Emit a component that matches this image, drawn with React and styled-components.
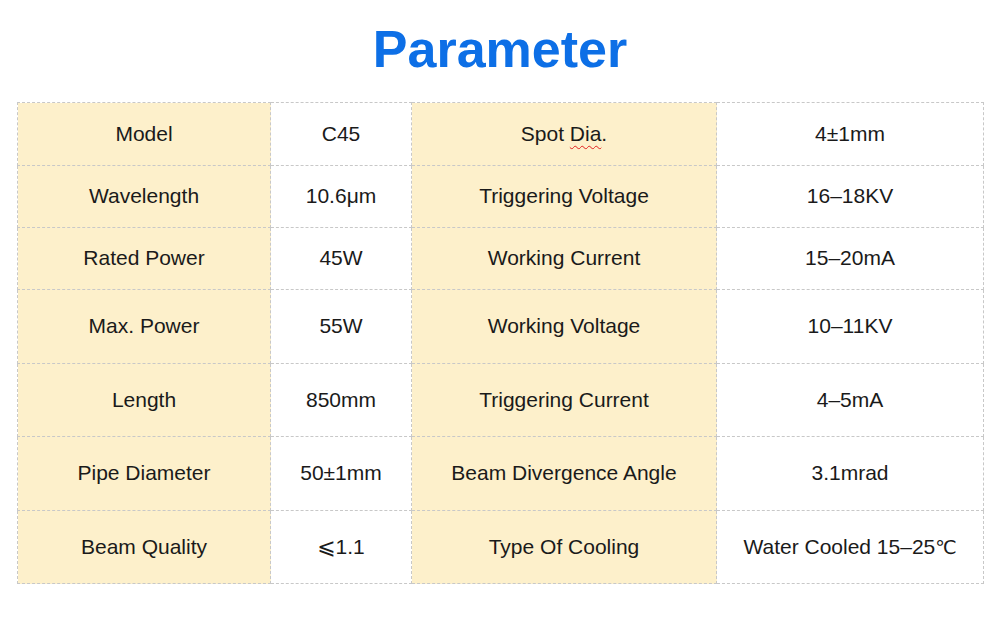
import React from "react";
import styled, { createGlobalStyle } from "styled-components";

const Global = createGlobalStyle`
  html, body { margin: 0; padding: 0; background: #fff; }
  body { font-family: "Liberation Sans", Arial, "DejaVu Sans", "Noto Sans CJK SC", sans-serif; }
`;

const Page = styled.div`
  width: 1000px;
  height: 626px;
  box-sizing: border-box;
  padding: 0 17px 0 17px;
  display: flex;
  flex-direction: column;
`;

const Title = styled.h1`
  margin: 0;
  height: 102px;
  display: flex;
  align-items: center;
  justify-content: center;
  font-family: "Liberation Sans", Arial, sans-serif;
  font-weight: 700;
  font-size: 52px;
  color: #0d6fe6;
  padding-bottom: 4px;
  box-sizing: border-box;
`;

const Table = styled.table`
  width: 966px;
  border-collapse: collapse;
  table-layout: fixed;
`;

const Row = styled.tr`
  height: ${(p) => p.$h}px;
`;

const Cell = styled.td`
  border: 1px dashed #c8c8c8;
  background: ${(p) => (p.$label ? "#fdf0cb" : "#ffffff")};
  text-align: center;
  vertical-align: middle;
  padding: 0 0 1px 0;
  font-size: 21px;
  line-height: 24px;
  color: #1a1a1a;
`;

const Symbol = styled.span`
  font-family: "DejaVu Sans", sans-serif;
  font-size: ${(p) => p.$size || 19}px;
  line-height: 0;
`;

const Squiggle = styled.span`
  text-decoration: underline wavy #e02020;
  text-decoration-thickness: 1px;
  text-underline-offset: 4px;
`;

const rows = [
  [63, "Model", "C45", <>Spot <Squiggle>Dia</Squiggle>.</>, "4±1mm"],
  [62, "Wavelength", "10.6μm", "Triggering Voltage", "16–18KV"],
  [62, "Rated Power", "45W", "Working Current", "15–20mA"],
  [74, "Max. Power", "55W", "Working Voltage", "10–11KV"],
  [73, "Length", "850mm", "Triggering Current", "4–5mA"],
  [74, "Pipe Diameter", "50±1mm", "Beam Divergence Angle", "3.1mrad"],
  [73, "Beam Quality", <><Symbol $size={22}>⩽</Symbol>1.1</>, "Type Of Cooling", <>Water Cooled 15–25<Symbol>℃</Symbol></>],
];

export default function App() {
  return (
    <>
      <Global />
      <Page>
        <Title>Parameter</Title>
        <Table>
          <colgroup>
            <col style={{ width: 253 }} />
            <col style={{ width: 141 }} />
            <col style={{ width: 305 }} />
            <col style={{ width: 267 }} />
          </colgroup>
          <tbody>
            {rows.map(([h, a, b, c, d], i) => (
              <Row key={i} $h={h}>
                <Cell $label>{a}</Cell>
                <Cell>{b}</Cell>
                <Cell $label>{c}</Cell>
                <Cell>{d}</Cell>
              </Row>
            ))}
          </tbody>
        </Table>
      </Page>
    </>
  );
}
